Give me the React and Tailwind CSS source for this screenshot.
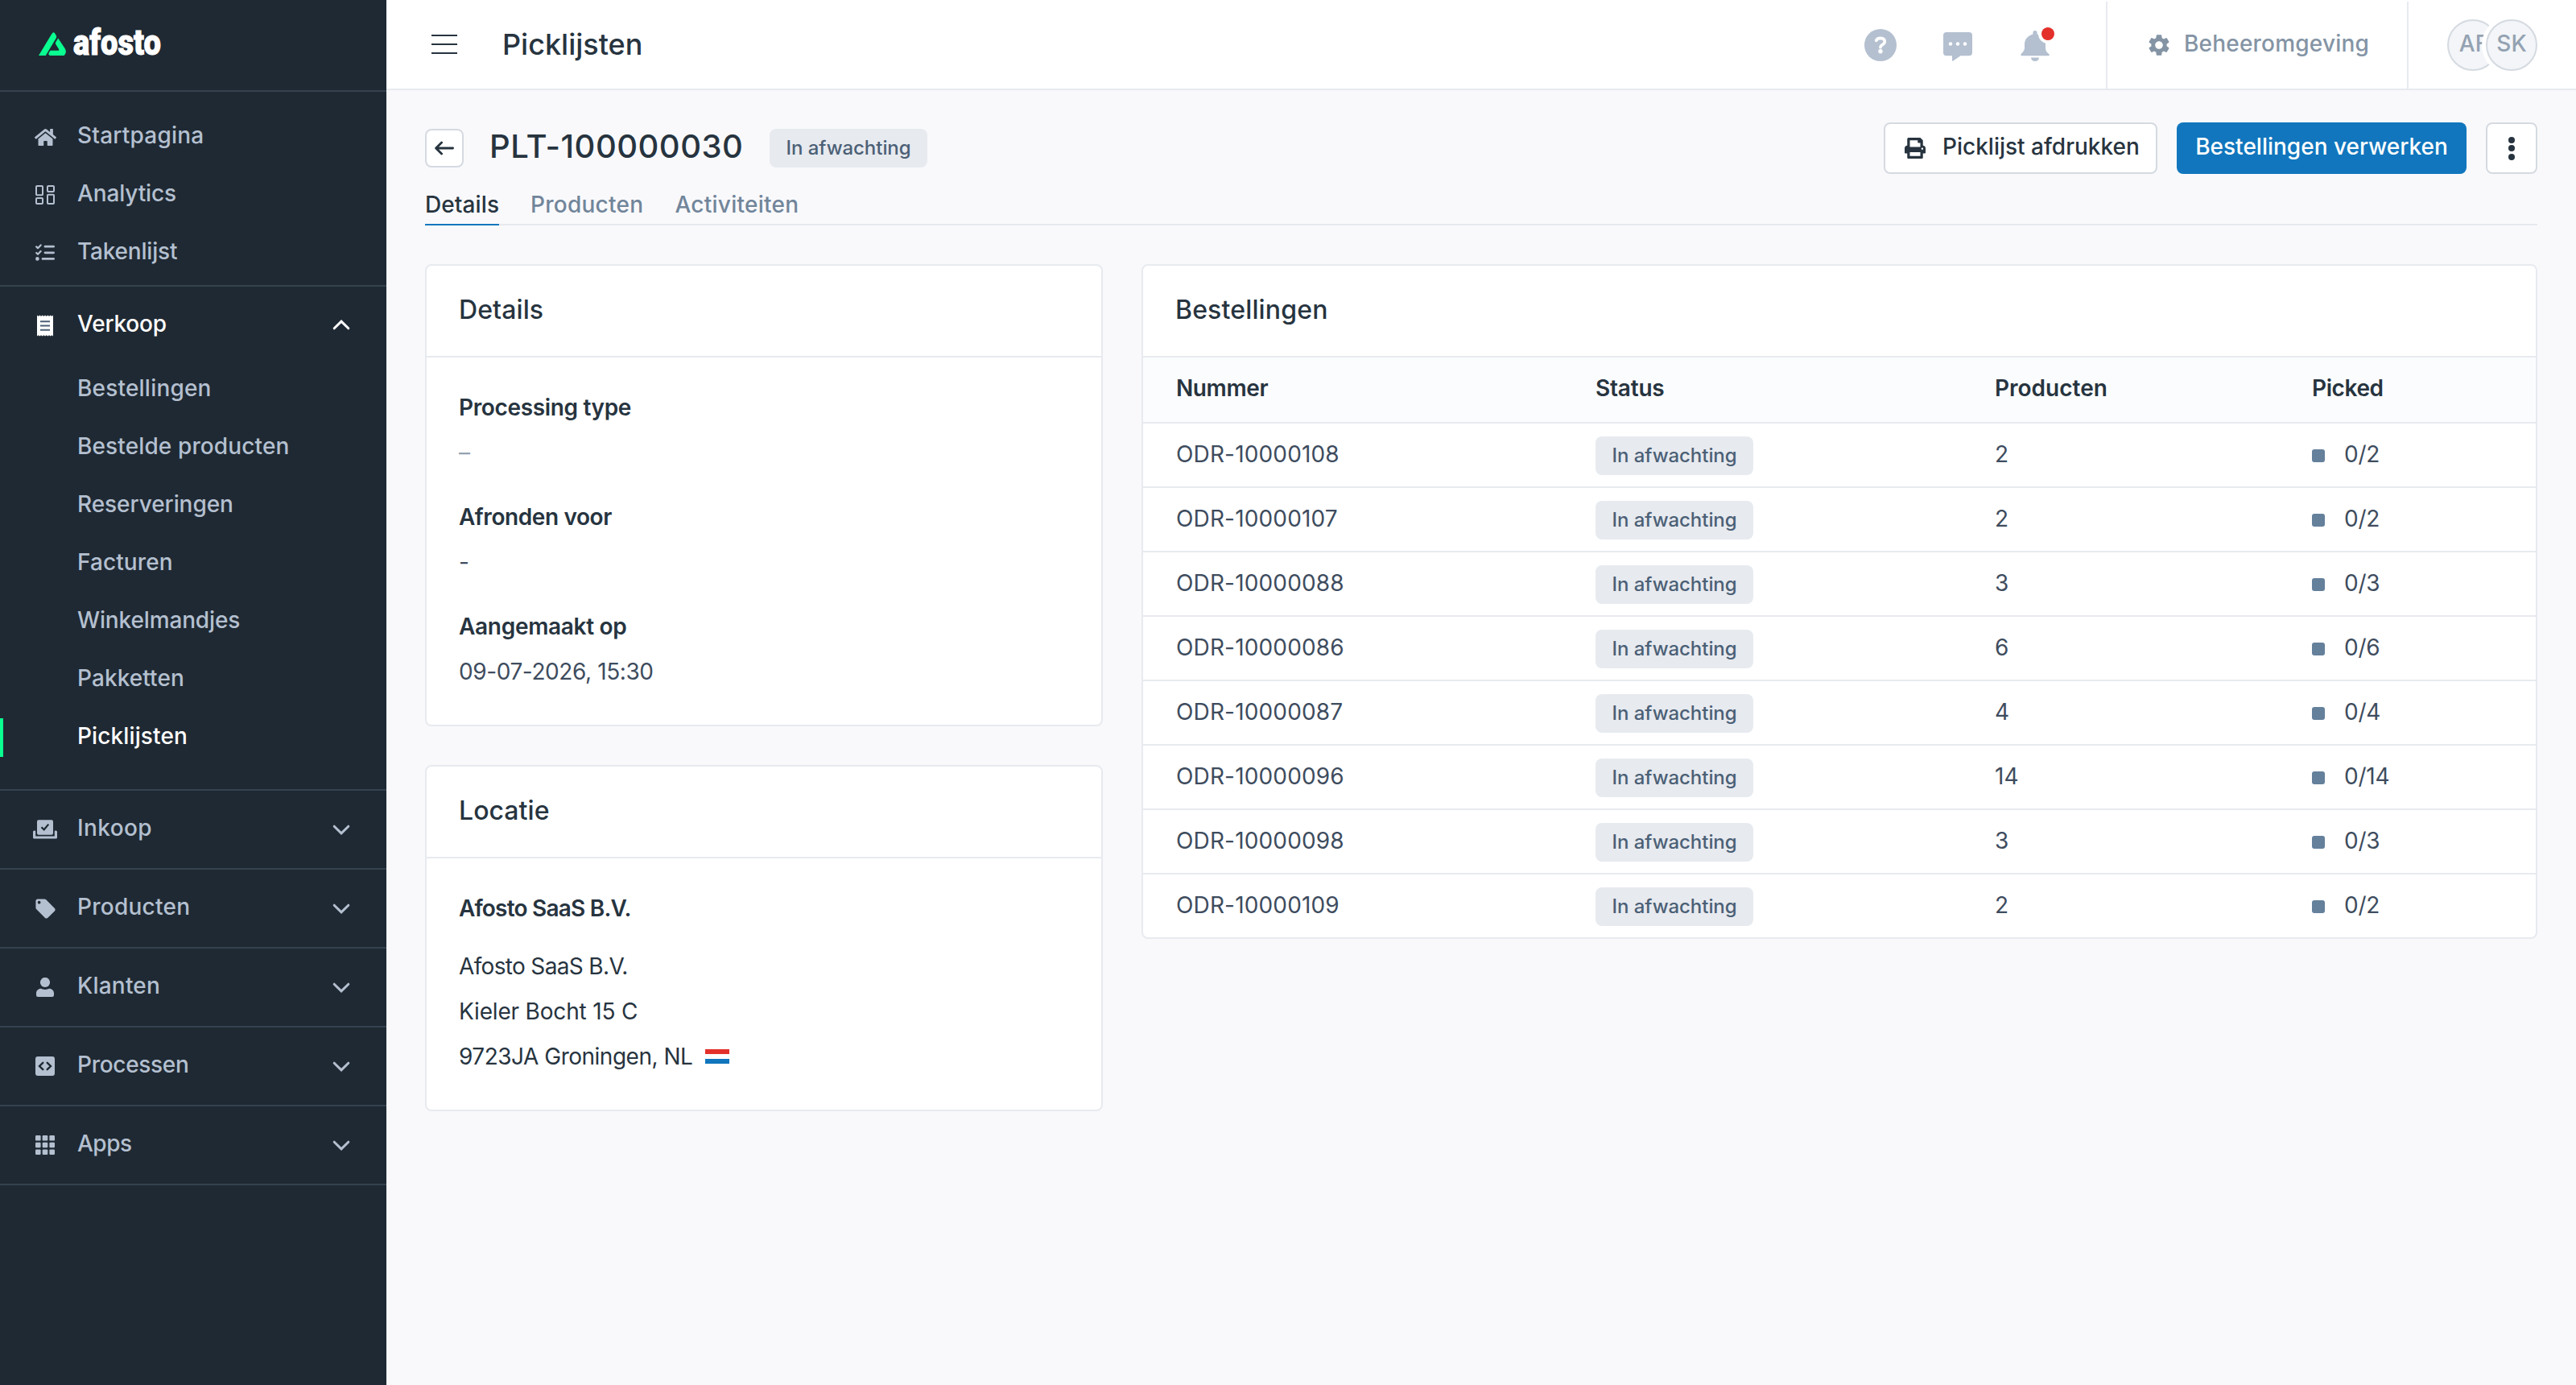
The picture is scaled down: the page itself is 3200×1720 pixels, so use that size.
import React from "react";
import { FaHome, FaPrint } from "react-icons/fa";
import { MdLocalOffer, MdSettings } from "react-icons/md";

function DashboardIcon() {
  return (
    <svg width="24" height="24" viewBox="0 0 24 24" fill="none" stroke="currentColor" strokeWidth="2">
      <rect x="1" y="1" width="8" height="11.3" rx="1" />
      <rect x="1" y="16" width="8" height="7" rx="1" />
      <rect x="15" y="1" width="8" height="7" rx="1" />
      <rect x="15" y="11.7" width="8" height="11.3" rx="1" />
    </svg>
  );
}

function TaskListIcon() {
  return (
    <svg width="24" height="24" viewBox="0 0 24 24" fill="none" stroke="currentColor" strokeLinecap="round">
      <path d="M12 4.2H22.6M12 11.8H22.6M9 19.4H22.6" strokeWidth="2.8" />
      <path d="M1.2 4.4L3 6.2L6.6 2.4M1.2 12L3 13.8L6.6 10" strokeWidth="2.2" strokeLinejoin="round" />
      <circle cx="2.4" cy="19.4" r="2.3" fill="currentColor" stroke="none" />
    </svg>
  );
}

function ReceiptIcon() {
  return (
    <svg width="20" height="27" viewBox="0 0 20 27">
      <path
        d="M0 0.4L1.7 1.8L3.4 0.4L5 1.8L6.7 0.4L8.4 1.8L10 0.4L11.7 1.8L13.4 0.4L15 1.8L16.7 0.4L18.4 1.8L20 0.4V26.6L18.4 25.2L16.7 26.6L15 25.2L13.4 26.6L11.7 25.2L10 26.6L8.4 25.2L6.7 26.6L5 25.2L3.4 26.6L1.7 25.2L0 26.6Z"
        fill="currentColor"
      />
      <path d="M4 8.3H16M4 13.5H16M4 18.7H16" stroke="#4b6076" strokeWidth="2" />
    </svg>
  );
}

function BallotIcon() {
  return (
    <svg width="30" height="24" viewBox="0 0 30 24">
      <rect x="5" y="0.2" width="20" height="18.6" rx="2" fill="currentColor" />
      <path d="M10.5 9.2L13.7 12.3L19.3 5.6" fill="none" stroke="#1f2933" strokeWidth="2.2" />
      <path
        d="M1.4 13.5H2.2Q3.2 13.5 3.2 14.5V20.4H26.8V14.5Q26.8 13.5 27.8 13.5H28.6Q30 13.5 30 15V22Q30 23.6 28.4 23.6H1.6Q0 23.6 0 22V15Q0 13.5 1.4 13.5Z"
        fill="currentColor"
      />
    </svg>
  );
}

function PersonIcon() {
  return (
    <svg width="22" height="24" viewBox="0 0 22 24" fill="currentColor">
      <circle cx="11" cy="6" r="6.1" />
      <path d="M6 13.7C7.5 14.4 9 14.9 11 14.9S14.5 14.4 16 13.7C19.5 13.7 22 16.2 22 19.5V21.8Q22 24 19.8 24H2.2Q0 24 0 21.8V19.5C0 16.2 2.5 13.7 6 13.7Z" />
    </svg>
  );
}

function CodeBoxIcon() {
  return (
    <svg width="24" height="24" viewBox="0 0 24 24">
      <rect width="24" height="24" rx="3" fill="currentColor" />
      <path d="M9.3 7.8L5 12L9.3 16.2M14.7 7.8L19 12L14.7 16.2" fill="none" stroke="#1f2933" strokeWidth="2.4" strokeLinecap="round" />
    </svg>
  );
}

function GridIcon() {
  return (
    <svg width="24" height="24" viewBox="0 0 24 24" fill="currentColor">
      {[0, 8.7, 17.4].map((y) =>
        [0, 8.7, 17.4].map((x) => <rect key={`${x}-${y}`} x={x} y={y} width="6.6" height="6.6" rx="1.2" />)
      )}
    </svg>
  );
}

function Chevron({ up }) {
  return (
    <svg width="24" height="16" viewBox="0 0 24 16" fill="none" stroke="currentColor" strokeWidth="3" strokeLinecap="round">
      <path d={up ? "M3.2 11.8L12 3.2L20.8 11.8" : "M3.2 4.2L12 12.8L20.8 4.2"} />
    </svg>
  );
}

function Logo() {
  return (
    <svg width="160" height="60" viewBox="0 -12 160 60">
      <g fill="#0aff91">
        <path d="M0 35L16.2 8.2Q18.7 4.3 20.7 8.2L22 10.8Q22.6 12 21.6 13.4L8.8 35Z" />
        <path d="M24.2 13.6L32.8 26.5Q35.4 31 31.6 35H14.5Q11.2 34.6 13 31L14.6 28.7H24.6Q25.8 28.5 25.2 27.2L21 20.4Q20.6 19.4 21.2 18.4Z" />
      </g>
      <text
        x="43"
        y="34.3"
        fill="#ffffff"
        stroke="#ffffff"
        strokeWidth="1"
        fontFamily="Roboto, sans-serif"
        fontWeight="900"
        fontSize="45"
        textLength="109"
        lengthAdjust="spacingAndGlyphs"
      >
        afosto
      </text>
    </svg>
  );
}

function NavItem({ icon, label, spacing }) {
  return (
    <div className="flex h-[72px] items-center">
      <span className="flex w-[112px] shrink-0 justify-center">{icon}</span>
      <span className={`-ml-4 pb-1 ${spacing}`}>{label}</span>
    </div>
  );
}

function SectionHeader({ icon, label, spacing, open }) {
  return (
    <div className={`flex h-24 items-center pr-11 ${open ? "text-white" : ""}`}>
      <span className="flex w-[112px] shrink-0 justify-center">{icon}</span>
      <span className={`-ml-4 grow pb-1 ${spacing}`}>{label}</span>
      <Chevron up={open} />
    </div>
  );
}

const salesItems = [
  ["Bestellingen", "tracking-[0.2px]"],
  ["Bestelde producten", "tracking-[0.12px]"],
  ["Reserveringen", "tracking-[-0.07px]"],
  ["Facturen", "tracking-[0.09px]"],
  ["Winkelmandjes", "tracking-[-0.14px]"],
  ["Pakketten", "tracking-[0.08px]"],
];

function Sidebar() {
  return (
    <aside className="flex w-[480px] shrink-0 flex-col bg-[#1f2933] font-medium text-[#b4c0d0]">
      <div className="h-[114px] border-b-2 border-[#35424f] pt-[22px] pl-12">
        <Logo />
      </div>
      <nav className="border-b-2 border-[#35424f] pt-5 pb-1">
        <NavItem icon={<FaHome size={27} />} label="Startpagina" spacing="tracking-[0.21px]" />
        <NavItem icon={<DashboardIcon />} label="Analytics" spacing="tracking-[-0.14px]" />
        <NavItem icon={<TaskListIcon />} label="Takenlijst" spacing="tracking-[-0.19px]" />
      </nav>
      <section className="border-b-2 border-[#35424f] pb-7">
        <SectionHeader open icon={<ReceiptIcon />} label="Verkoop" spacing="tracking-[-0.2px]" />
        <ul className="-mt-1">
          {salesItems.map(([label, spacing]) => (
            <li key={label} className={`flex h-[72px] items-center pb-1 pl-24 ${spacing}`}>
              {label}
            </li>
          ))}
          <li className="flex h-[72px] items-center text-white">
            <span className="h-12 w-1 bg-[#0aff91]" />
            <span className="pb-1 pl-[92px] tracking-[0.12px]">Picklijsten</span>
          </li>
        </ul>
      </section>
      <section className="border-b-2 border-[#35424f]">
        <SectionHeader icon={<BallotIcon />} label="Inkoop" spacing="tracking-[0.4px]" />
      </section>
      <section className="border-b-2 border-[#35424f]">
        <SectionHeader icon={<MdLocalOffer size={29} />} label="Producten" spacing="tracking-[0.26px]" />
      </section>
      <section className="border-b-2 border-[#35424f]">
        <SectionHeader icon={<PersonIcon />} label="Klanten" spacing="tracking-[0.21px]" />
      </section>
      <section className="border-b-2 border-[#35424f]">
        <SectionHeader icon={<CodeBoxIcon />} label="Processen" spacing="tracking-[-0.3px]" />
      </section>
      <section className="border-b-2 border-[#35424f]">
        <SectionHeader icon={<GridIcon />} label="Apps" spacing="tracking-[-0.49px]" />
      </section>
    </aside>
  );
}

function HelpIcon() {
  return (
    <svg width="40" height="40" viewBox="0 0 40 40">
      <circle cx="20" cy="20" r="20" fill="#b4c0d0" />
      <path
        d="M14.7 14.3Q15.9 11.4 20 11.4Q25.3 11.6 25.3 15.6Q25.3 17.9 22.6 19.5Q20 21 20 22.7"
        fill="none"
        stroke="#fff"
        strokeWidth="3.7"
        strokeLinecap="round"
        strokeLinejoin="round"
      />
      <circle cx="20" cy="27.7" r="2.7" fill="#fff" />
    </svg>
  );
}

function ChatIcon() {
  return (
    <svg width="36" height="40" viewBox="0 0 36 40">
      <path d="M4 4H32Q36 4 36 8V29.3Q36 33.3 32 33.3H21.5L12.4 39.6Q11 40.3 11 39V33.3H4Q0 33.3 0 29.3V8Q0 4 4 4Z" fill="#b4c0d0" />
      <g fill="#fff">
        <circle cx="9" cy="18.5" r="2.2" />
        <circle cx="18" cy="18.5" r="2.2" />
        <circle cx="27" cy="18.5" r="2.2" />
      </g>
    </svg>
  );
}

function BellIcon() {
  return (
    <svg width="44" height="44" viewBox="0 0 44 44">
      <path
        d="M15.4 6.5C15.4 3.2 20.6 3.2 20.6 6.5V8.6C27 10 31 14.8 31 21V26Q31 28.5 33 31L35.6 33.6Q36.6 35.6 34 35.2H2Q-0.6 35.2 0.6 33L3.2 30.2Q5 28 5 25.5V21C5 14.8 9.4 10 15.4 8.6Z"
        fill="#b4c0d0"
      />
      <path d="M13 37.4H23Q22.4 42 18 42Q13.6 42 13 37.4Z" fill="#b4c0d0" />
      <circle cx="34" cy="8" r="12" fill="#fff" />
      <circle cx="34" cy="8" r="8" fill="#e4302b" />
    </svg>
  );
}

function TopBar() {
  return (
    <header className="flex h-28 border-b-2 border-[#e7eaef] bg-white pt-[2px] pr-12 pl-14 text-[#27343f]">
      <div className="flex grow items-center pb-[2px]">
        <span className="flex w-8 flex-col gap-[8.5px]">
          <i className="h-[2.5px] bg-[#27343f]" />
          <i className="h-[2.5px] bg-[#27343f]" />
          <i className="h-[2.5px] bg-[#27343f]" />
        </span>
        <h1 className="ml-14 text-[36px] leading-none font-medium">Picklijsten</h1>
      </div>
      <div className="flex items-center pr-[62px]">
        <HelpIcon />
        <span className="ml-[58px]">
          <ChatIcon />
        </span>
        <span className="ml-[60px]">
          <BellIcon />
        </span>
      </div>
      <div className="flex w-[376px] items-center border-x-2 border-[#e7eaef] pl-12 font-medium text-[#8494a5]">
        <MdSettings size={32} />
        <span className="ml-[15px] pb-1 tracking-[0.2px]">Beheeromgeving</span>
      </div>
      <div className="flex items-center pl-12 font-medium text-[#93a2b2]">
        <span className="flex h-16 w-16 items-center justify-center rounded-full border-2 border-[#d5dae1] bg-[#f3f5f8] pb-1 pl-[2px]">AF</span>
        <span className="z-10 -ml-4 flex h-16 w-16 items-center justify-center rounded-full border-2 border-[#d5dae1] bg-[#f3f5f8] pb-1 shadow-[0_0_0_5px_#fff]">
          SK
        </span>
      </div>
    </header>
  );
}

function Badge() {
  return (
    <span className="flex h-12 w-[196px] items-center justify-center rounded-lg bg-[#e7eaef] text-[24px] font-medium tracking-[-0.05px] text-[#4b6076]">
      In afwachting
    </span>
  );
}

function PageHeader() {
  return (
    <div>
      <div className="flex h-16 items-center">
        <button className="flex h-12 w-12 items-center justify-center rounded-lg border-2 border-[#d5dae1] bg-white">
          <svg width="24" height="20" viewBox="0 0 24 20" fill="none" stroke="#27343f" strokeWidth="2.8" strokeLinecap="round" strokeLinejoin="round">
            <path d="M22.6 10H1.8M8.6 3L1.6 10L8.6 17" />
          </svg>
        </button>
        <h2 className="mr-8 ml-8 w-[316px] pb-1 text-[40px] leading-none font-[550] tracking-[0.5px] whitespace-nowrap">PLT-100000030</h2>
        <Badge />
        <div className="ml-auto flex gap-6 font-medium">
          <button className="flex h-16 w-[340px] items-center rounded-lg border-2 border-[#d5dae1] bg-white pl-6">
            <FaPrint size={26} />
            <span className="ml-[21px] pb-1">Picklijst afdrukken</span>
          </button>
          <button className="flex h-16 w-[360px] items-center justify-center rounded-lg bg-[#1176bd] pb-1 text-white">Bestellingen verwerken</button>
          <button className="flex h-16 w-16 flex-col items-center justify-center gap-[2.5px] rounded-lg border-2 border-[#d5dae1] bg-white">
            <i className="h-2 w-2 rounded-full bg-[#27343f]" />
            <i className="h-2 w-2 rounded-full bg-[#27343f]" />
            <i className="h-2 w-2 rounded-full bg-[#27343f]" />
          </button>
        </div>
      </div>
      <div className="mt-3 flex h-[52px] gap-[39px] border-b-2 border-[#e7eaef] font-medium text-[#71859a]">
        <span className="-mb-[2px] w-[92px] border-b-2 border-[#1176bd] pt-[6px] tracking-[0.1px] font-[550] text-[#27343f]">Details</span>
        <span className="pt-[6px] tracking-[0.26px]">Producten</span>
        <span className="pt-[6px] tracking-[0.27px]">Activiteiten</span>
      </div>
    </div>
  );
}

function Card({ title, spacing, children }) {
  return (
    <section className="overflow-hidden rounded-lg border-2 border-[#e7eaef] bg-white">
      <h3 className={`flex h-[114px] items-center border-b-2 border-[#e7eaef] px-10 pb-[2px] text-[32px] font-[550] ${spacing}`}>{title}</h3>
      {children}
    </section>
  );
}

const orders = [
  ["ODR-10000108", 2],
  ["ODR-10000107", 2],
  ["ODR-10000088", 3],
  ["ODR-10000086", 6],
  ["ODR-10000087", 4],
  ["ODR-10000096", 14],
  ["ODR-10000098", 3],
  ["ODR-10000109", 2],
];

export default function App() {
  return (
    <div className="flex h-[1720px] w-[3200px] overflow-hidden bg-[#f9f9fb] font-[Inter,sans-serif] text-[28px] leading-[40px] text-[#27343f]">
      <Sidebar />
      <div className="flex grow flex-col">
        <TopBar />
        <main className="px-12 pt-10">
          <PageHeader />
          <div className="mt-12 grid grid-cols-[842px_1734px] items-start gap-12">
            <div className="flex flex-col gap-12">
              <Card title="Details" spacing="tracking-[0.1px]">
                <dl className="px-10 pt-[34px] pb-[38px] leading-[56px]">
                  <dt className="font-semibold tracking-[-0.35px]">Processing type</dt>
                  <dd className="mb-6 text-[#93a2b2]">–</dd>
                  <dt className="font-semibold tracking-[-0.4px]">Afronden voor</dt>
                  <dd className="mb-6 text-[#3e4c5e]">-</dd>
                  <dt className="font-semibold tracking-[-0.3px]">Aangemaakt op</dt>
                  <dd className="tracking-[-0.4px] text-[#3e4c5e]">09-07-2026, 15:30</dd>
                </dl>
              </Card>
              <Card title="Locatie" spacing="tracking-[0.05px]">
                <div className="px-10 pt-[34px] pb-[38px] leading-[56px]">
                  <p className="mb-4 font-semibold tracking-[-0.79px]">Afosto SaaS B.V.</p>
                  <p className="tracking-[-0.66px]">Afosto SaaS B.V.</p>
                  <p className="tracking-[-0.18px]">Kieler Bocht 15 C</p>
                  <p className="flex items-center tracking-[-0.49px]">
                    9723JA Groningen, NL
                    <span className="ml-4 flex h-[18px] w-[30px] flex-col justify-between">
                      <i className="h-[6px] bg-[#e4302b]" />
                      <i className="h-[6px] bg-[#1176bd]" />
                    </span>
                  </p>
                </div>
              </Card>
            </div>
            <Card title="Bestellingen" spacing="tracking-[0.15px]">
              <div className="grid h-20 grid-cols-[521px_496px_394px_1fr] items-center bg-[#fbfcfe] pb-1 pl-[41px] font-semibold">
                <span className="tracking-[-0.4px]">Nummer</span>
                <span className="tracking-[-0.2px]">Status</span>
                <span>Producten</span>
                <span className="tracking-[-0.4px]">Picked</span>
              </div>
              {orders.map(([id, count]) => (
                <div key={id} className="grid h-20 grid-cols-[521px_496px_394px_1fr] items-center border-t-2 border-[#e7eaef] pl-[41px] text-[#3e4c5e]">
                  <span className="pb-[2px] tracking-[0.16px]">{id}</span>
                  <span className="pt-[2px]">
                    <Badge />
                  </span>
                  <span className="pb-[2px]">{count}</span>
                  <span className="flex items-center gap-6">
                    <i className="mt-[2px] h-4 w-4 rounded-[3px] bg-[#64809b]" />
                    <span className="pb-[2px] tracking-[-0.2px]">0/{count}</span>
                  </span>
                </div>
              ))}
            </Card>
          </div>
        </main>
      </div>
    </div>
  );
}
